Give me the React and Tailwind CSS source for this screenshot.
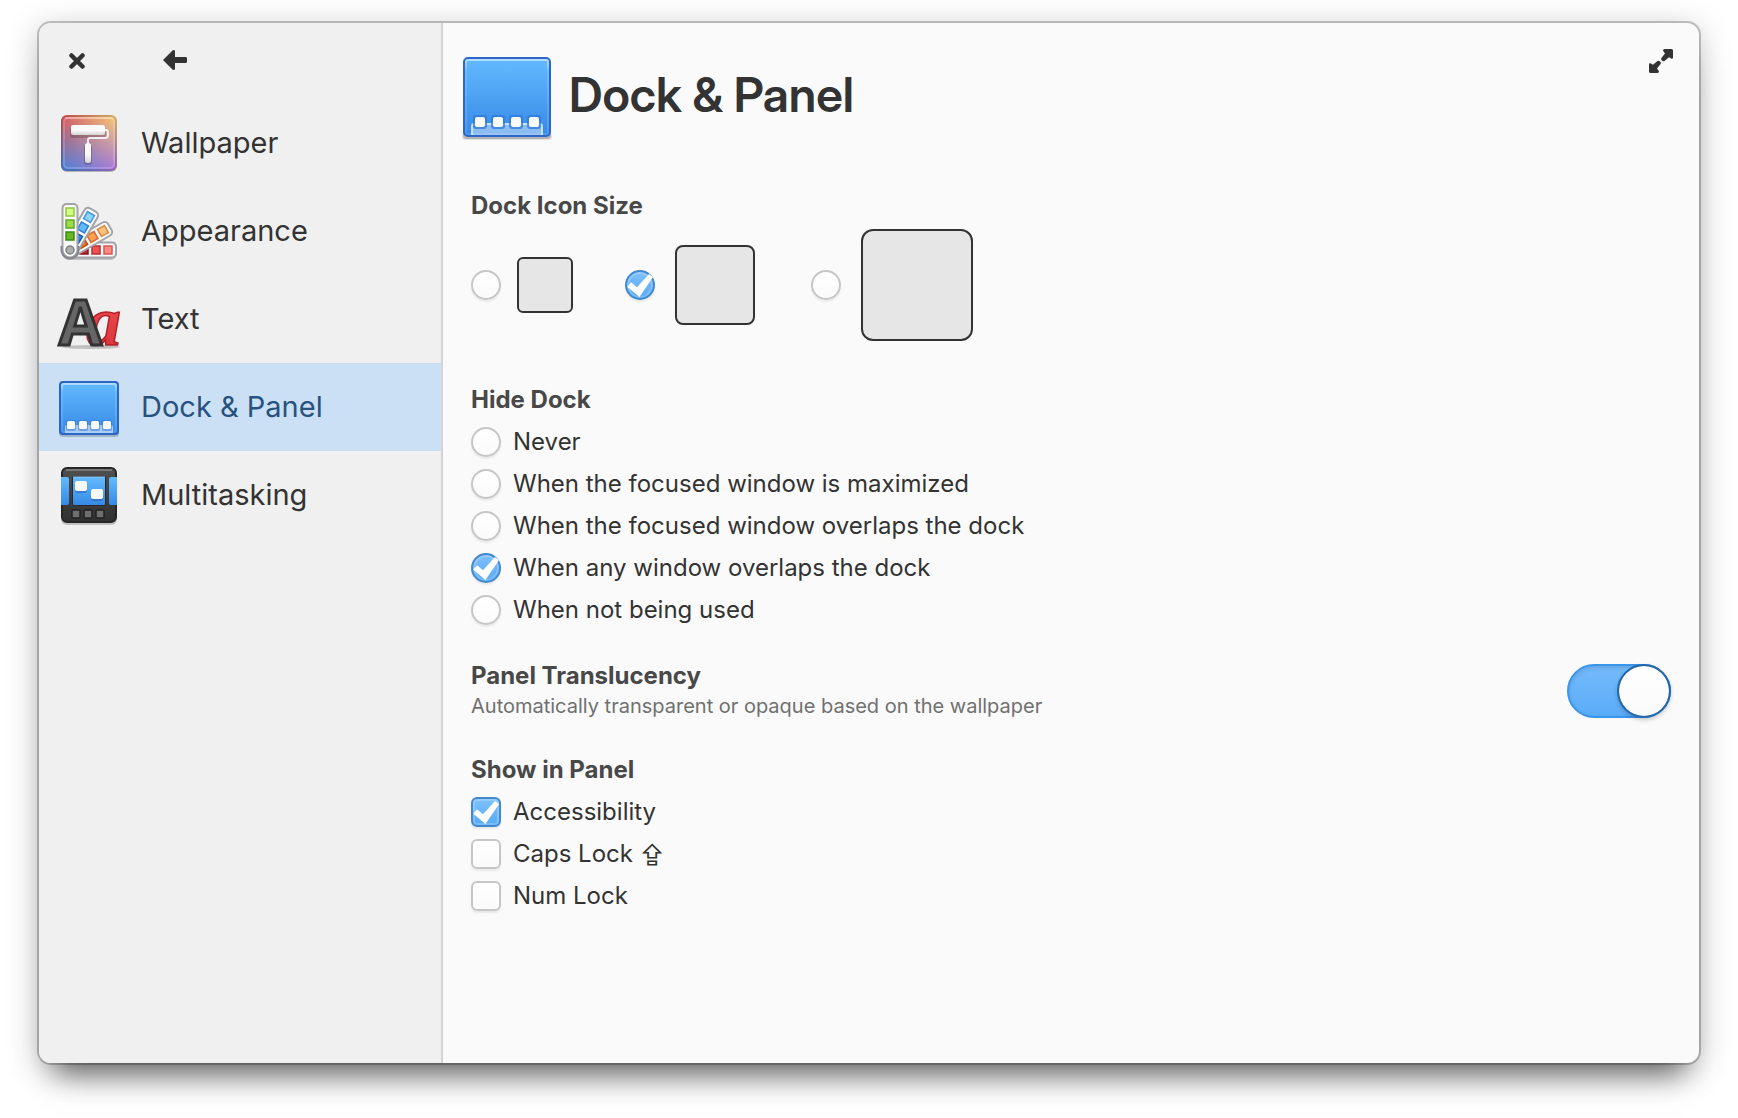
import React from "react";

function Defs() {
  return (
    <svg width="0" height="0" className="absolute" aria-hidden="true">
      <defs>
        <linearGradient id="blue" x1="0" y1="0" x2="0" y2="1">
          <stop offset="0" stopColor="#64baff" />
          <stop offset="1" stopColor="#3689e6" />
        </linearGradient>
        <linearGradient id="edge" x1="0" y1="0" x2="0" y2="1">
          <stop offset="0" stopColor="#fff" stopOpacity=".5" />
          <stop offset=".15" stopColor="#fff" stopOpacity=".12" />
          <stop offset="1" stopColor="#fff" stopOpacity=".12" />
        </linearGradient>
        <linearGradient id="wallTop" x1="0" y1="0" x2="1" y2="0">
          <stop offset="0" stopColor="#ed5353" />
          <stop offset="1" stopColor="#ffd76b" />
        </linearGradient>
        <linearGradient id="wallBottom" x1="0" y1="0" x2="1" y2="0">
          <stop offset="0" stopColor="#3689e6" />
          <stop offset="1" stopColor="#a56de2" />
        </linearGradient>
        <linearGradient id="fade" x1="0" y1="0" x2="0" y2="1">
          <stop offset="0" stopColor="#000" />
          <stop offset="1" stopColor="#fff" />
        </linearGradient>
        <mask id="fadeMask">
          <rect width="64" height="64" fill="url(#fade)" />
        </mask>
        <linearGradient id="roller" x1="0" y1="0" x2="0" y2="1">
          <stop offset=".55" stopColor="#fafafa" />
          <stop offset="1" stopColor="#d4d4d4" />
        </linearGradient>
        <linearGradient id="dark" x1="0" y1="0" x2="0" y2="1">
          <stop offset="0" stopColor="#505050" />
          <stop offset="1" stopColor="#303030" />
        </linearGradient>
        <linearGradient id="letterRed" x1="0" y1="0" x2="0" y2="1">
          <stop offset="0" stopColor="#ed5353" />
          <stop offset="1" stopColor="#d9303a" />
        </linearGradient>
      </defs>
    </svg>
  );
}

function WallpaperIcon() {
  return (
    <svg width="64" height="64" viewBox="0 0 64 64" aria-hidden="true">
      <rect x="4" y="5" width="56" height="56" rx="6" fill="#000" opacity=".25" />
      <rect x="4" y="4" width="56" height="56" rx="6" fill="url(#wallTop)" />
      <rect x="4" y="4" width="56" height="56" rx="6" fill="url(#wallBottom)" mask="url(#fadeMask)" />
      <rect x="7" y="7" width="50" height="50" rx="4" fill="none" stroke="#fff" strokeOpacity=".18" strokeWidth="2" />
      <path d="M8 7h48" stroke="#fff" strokeOpacity=".3" strokeWidth="2" />
      <rect x="5" y="5" width="54" height="54" rx="5" fill="none" stroke="#000" strokeOpacity=".15" strokeWidth="2" />
      <rect x="13" y="17" width="36" height="10" rx="2" fill="#000" opacity=".18" />
      <rect x="27" y="34" width="8" height="20" rx="3" fill="#000" opacity=".18" />
      <path d="M48 19h1a2 2 0 0 1 2 2v3a3 3 0 0 1-3 3H33a2 2 0 0 0-2 2v5" fill="none" stroke="#f0eef2" strokeWidth="2" />
      <rect x="14" y="14" width="34" height="10" rx="2" fill="url(#roller)" />
      <rect x="28" y="32" width="6" height="20" rx="2.500" fill="url(#roller)" />
    </svg>
  );
}

const strips = [
  { angle: 90, colors: [["#ff8c82", "#d65550"], ["#ed5353", "#b82e30"], ["#c6262e", "#8f1016"]] },
  { angle: 60, colors: [["#ffc27d", "#dd8440"], ["#ffa154", "#d5682a"], ["#e8702a", "#b84d10"]] },
  { angle: 30, colors: [["#8cd5ff", "#4a96e0"], ["#64baff", "#2d7cd6"], ["#3689e6", "#1a5db0"]] },
  { angle: 0, colors: [["#d1ff82", "#8fc93f"], ["#9bdb4d", "#62a82a"], ["#68b723", "#3d8a10"]] },
];

function AppearanceIcon() {
  return (
    <svg width="64" height="64" viewBox="0 0 64 64" aria-hidden="true">
      <rect x="6" y="44" width="53" height="17" rx="5" fill="#000" opacity=".2" />
      {strips.map((s) => (
        <g key={s.angle} transform={`rotate(${s.angle} 13 51)`}>
          <path d="M5.500 9a4 4 0 0 1 4-4h7a4 4 0 0 1 4 4v42a7.500 7.500 0 0 1-15 0z" fill="#fbfbfb" stroke="#a3a4aa" strokeWidth="2" />
          {s.colors.map(([fill, stroke], i) => (
            <rect key={fill} x="9" y={9 + i * 12} width="8" height="8" fill={fill} stroke={stroke} strokeWidth="1.500" />
          ))}
        </g>
      ))}
      <path d="M4.500 47v4a8.500 8.500 0 0 0 17 0v-4" fill="none" stroke="#85868d" strokeWidth="2" />
      <circle cx="13" cy="51" r="4" fill="#abacae" stroke="#7e8087" strokeWidth="1.500" />
    </svg>
  );
}

function TextIcon() {
  return (
    <svg width="64" height="64" viewBox="0 0 64 64" className="overflow-visible" aria-hidden="true">
      <ellipse cx="34" cy="60" rx="29" ry="2" fill="#000" opacity=".2" />
      <text x="29" y="58" fontFamily="Liberation Serif, serif" fontStyle="italic" fontWeight="700" fontSize="70" fill="url(#letterRed)" stroke="#b3202a" strokeWidth="1.500">a</text>
      <text x="2" y="58" fontFamily="Open Sans, sans-serif" fontWeight="700" fontSize="62" fill="#666" stroke="#333" strokeWidth="3">A</text>
    </svg>
  );
}

function DockIcon() {
  return (
    <svg width="64" height="64" viewBox="0 0 64 64" aria-hidden="true">
      <rect x="2" y="8" width="60" height="54" rx="4" fill="#000" opacity=".2" />
      <rect x="3" y="7" width="58" height="52" rx="3" fill="url(#blue)" stroke="#2a66c8" strokeWidth="2" />
      <rect x="5" y="9" width="54" height="48" rx="2" fill="none" stroke="url(#edge)" strokeWidth="2" />
      <path d="M8 58v-6a2 2 0 0 1 2-2h44a2 2 0 0 1 2 2v6z" fill="#c3daf6" opacity=".8" />
      {[10, 22, 34, 46].map((x) => (
        <g key={x}>
          <rect x={x - 1} y="45" width="10" height="11" rx="2" fill="#2d74d0" opacity=".5" />
          <rect x={x} y="46" width="8" height="8" rx="1.500" fill="#fafafa" />
        </g>
      ))}
    </svg>
  );
}

function DockIconLarge() {
  return (
    <svg width="96" height="96" viewBox="0 0 96 96" aria-hidden="true">
      <rect x="3" y="84" width="90" height="7" rx="3" fill="#000" opacity=".1" />
      <rect x="4" y="80" width="88" height="10" rx="4" fill="#000" opacity=".2" />
      <rect x="5" y="9" width="86" height="78" rx="4" fill="url(#blue)" stroke="#2b68c8" strokeWidth="2" />
      <rect x="7" y="11" width="82" height="74" rx="2" fill="none" stroke="url(#edge)" strokeWidth="2" />
      <path d="M13 86V77a2 2 0 0 1 2-2h66a2 2 0 0 1 2 2v9" fill="#fff" fillOpacity=".42" stroke="#d8e9fc" strokeOpacity=".85" strokeWidth="2" />
      {[16, 34, 52, 70].map((x) => (
        <g key={x}>
          <rect x={x - 2} y="66" width="14" height="14" rx="3" fill="#2f79d8" opacity=".75" />
          <rect x={x} y="68" width="10" height="10" rx="2" fill="#fafafa" />
        </g>
      ))}
    </svg>
  );
}

function MultitaskingIcon() {
  return (
    <svg width="64" height="64" viewBox="0 0 64 64" aria-hidden="true">
      <rect x="4" y="6" width="56" height="56" rx="6" fill="#000" opacity=".2" />
      <rect x="5" y="5" width="54" height="54" rx="5" fill="url(#dark)" stroke="#262626" strokeWidth="2" />
      <path d="M9 7h46" stroke="#777" strokeWidth="2" />
      <path d="M4 14h6a2 2 0 0 1 2 2v24a2 2 0 0 1-2 2H4zM60 14h-6a2 2 0 0 0-2 2v24a2 2 0 0 0 2 2h6z" fill="url(#blue)" />
      <rect x="15" y="13" width="34" height="30" rx="2" fill="#2a2a2a" />
      <rect x="16" y="14" width="32" height="28" rx="1" fill="url(#blue)" />
      <path d="M16 14h32" stroke="#8ccbff" strokeWidth="1" />
      <rect x="18" y="20" width="12" height="10" rx="2" fill="#1d5fb4" opacity=".5" />
      <rect x="34" y="28" width="12" height="10" rx="2" fill="#1d5fb4" opacity=".5" />
      <rect x="18" y="18" width="12" height="10" rx="2" fill="#fafafa" />
      <rect x="34" y="26" width="12" height="10" rx="2" fill="#fafafa" />
      {[15, 27, 39].map((x) => (
        <rect key={x} x={x} y="47" width="8" height="8" rx="1" fill="#6e6e6e" stroke="#222" strokeWidth="1.500" />
      ))}
    </svg>
  );
}

const sections = [
  { name: "Wallpaper", Icon: WallpaperIcon },
  { name: "Appearance", Icon: AppearanceIcon },
  { name: "Text", Icon: TextIcon },
  { name: "Dock & Panel", Icon: DockIcon, current: true },
  { name: "Multitasking", Icon: MultitaskingIcon },
];

function CheckMark() {
  return (
    <svg viewBox="0 0 30 30" aria-hidden="true" className="pointer-events-none invisible col-start-1 row-start-1 size-[30px] peer-checked:visible">
      <path d="M2.300 16.700L6 12.300l6 5L24 4l4 3-13.500 20z" fill="#fff" />
    </svg>
  );
}

function Tick({ type, shape, ...props }) {
  return (
    <span className="grid size-[30px] shrink-0">
      <input
        type={type}
        className={
          "peer col-start-1 row-start-1 size-[30px] appearance-none border-2 border-[#c6c6c6] bg-linear-to-b from-white to-[#fafafa] shadow-[0_2px_2px_rgba(0,0,0,0.07)] checked:border-[#4289cd] checked:from-[#7ec0fc] checked:to-[#57aaf8] checked:shadow-[inset_0_0_0_2px_rgba(255,255,255,0.2),0_2px_2px_rgba(0,0,0,0.07)] " +
          shape
        }
        {...props}
      />
      <CheckMark />
    </span>
  );
}

function Choice({ type, name, text, checked }) {
  return (
    <label className="flex items-center gap-3 text-2xl leading-[30px] text-[#333]">
      <Tick type={type} name={name} defaultChecked={checked} shape={type === "radio" ? "rounded-full" : "rounded-md"} />
      <span>{text}</span>
    </label>
  );
}

const sizes = [
  { name: "Small", label: "gap-4", box: "size-14 rounded-md" },
  { name: "Default", label: "mr-1 gap-5", box: "size-20 rounded-lg", checked: true },
  { name: "Large", label: "gap-5", box: "size-28 rounded-xl" },
];

const hideModes = [
  "Never",
  "When the focused window is maximized",
  "When the focused window overlaps the dock",
  "When any window overlaps the dock",
  "When not being used",
];

const indicators = ["Accessibility", "Caps Lock ⇪", "Num Lock"];

const heading = "text-2xl leading-[30px] font-bold text-[#484848]";

export default function App() {
  return (
    <div className="flex min-h-screen bg-white px-[39px] pt-[23px] pb-[55px] font-['Inter',sans-serif] text-[#333]">
      <Defs />
      <div className="flex flex-1 rounded-xl bg-[#fafafa] shadow-[0_0_0_2px_rgba(0,0,0,0.22),0_6px_32px_rgba(0,0,0,0.25),0_28px_28px_-16px_rgba(0,0,0,0.5)]">
        <aside className="flex w-[404px] shrink-0 flex-col rounded-l-xl border-r-2 border-[#d4d4d4] bg-[#f0f0f0]">
          <div className="flex h-[76px] items-center gap-[71px] pl-[26px]">
            <button aria-label="Close" className="grid size-6 place-items-center">
              <svg width="16" height="16" viewBox="0 0 16 16" aria-hidden="true">
                <path d="M2.500 2.500l11 11M13.500 2.500l-11 11" stroke="#333" strokeWidth="4.500" strokeLinecap="round" />
              </svg>
            </button>
            <button aria-label="Back" className="grid size-[30px] place-items-center">
              <svg width="24" height="22" viewBox="0 0 24 22" aria-hidden="true">
                <path d="M0 10L9.500.6c1-.9 2.500-.6 2.500 1V7h10.500c1 0 1.500.7 1.500 1.500v3c0 .8-.5 1.500-1.500 1.500H12v5.400c0 1.600-1.500 1.900-2.500 1z" fill="#333" />
              </svg>
            </button>
          </div>
          <nav className="flex flex-col">
            {sections.map(({ name, Icon, current }) => (
              <button
                key={name}
                aria-current={current ? "page" : undefined}
                className={
                  "flex h-[88px] items-center gap-5 pl-[18px] text-left text-[29px] leading-9 " +
                  (current ? "bg-[#cbe0f4] text-[#27527f]" : "")
                }
              >
                <Icon />
                <span>{name}</span>
              </button>
            ))}
          </nav>
        </aside>

        <main className="flex min-w-0 flex-1 flex-col pr-7 pb-7 pl-7">
          <header className="-ml-3 flex items-start justify-between pt-[26px]">
            <div className="flex items-center gap-3.5">
              <DockIconLarge />
              <h1 className="pb-1 font-['Inter_Display','Inter',sans-serif] text-5xl font-semibold [font-variation-settings:'opsz'_32]">Dock &amp; Panel</h1>
            </div>
            <button aria-label="Maximize" className="-mr-0.5 grid size-6 place-items-center">
              <svg width="24" height="24" viewBox="0 0 24 24" aria-hidden="true">
                <path d="M15.500 0H22.500Q24 0 24 1.500V8.500Q24 10 22.600 9.800L20 8.200 15.500 12Q14 12.600 12.800 11.400 11.600 10.200 12.400 9L16 4.500 14 1.700Q14 0 15.500 0z" fill="#333" />
                <path d="M8.500 24H1.500Q0 24 0 22.500V15.500Q0 14 1.400 14.200L4 15.800 8.500 12Q10 11.400 11.200 12.600 12.400 13.800 11.600 15L8 19.500 10 22.300Q10 24 8.500 24z" fill="#333" />
              </svg>
            </button>
          </header>

          <fieldset className="mt-[46px]">
            <legend className={heading}>Dock Icon Size</legend>
            <div className="mt-2 flex items-center gap-[52px]">
              {sizes.map((s) => (
                <label key={s.name} aria-label={s.name} className={"flex items-center " + s.label}>
                  <Tick type="radio" name="icon-size" defaultChecked={s.checked} shape="rounded-full" />
                  <span className={"border-2 border-[#333] bg-[#e6e6e6] " + s.box} />
                </label>
              ))}
            </div>
          </fieldset>

          <fieldset className="mt-11">
            <legend className={heading}>Hide Dock</legend>
            <div className="mt-3 flex flex-col gap-3">
              {hideModes.map((text, i) => (
                <Choice key={text} type="radio" name="hide-dock" text={text} checked={i === 3} />
              ))}
            </div>
          </fieldset>

          <div className="mt-9 flex items-center justify-between">
            <div>
              <label htmlFor="translucency" className={"block " + heading}>Panel Translucency</label>
              <p className="text-xl leading-[30px] text-[#707070]">Automatically transparent or opaque based on the wallpaper</p>
            </div>
            <span className="grid shrink-0">
              <input
                id="translucency"
                type="checkbox"
                role="switch"
                defaultChecked
                className="peer col-start-1 row-start-1 h-[54px] w-[104px] appearance-none rounded-full border-2 border-[#c6c6c6] bg-[#e6e6e6] checked:border-[#3895ec] checked:bg-linear-to-b checked:from-[#74bafb] checked:to-[#5aacf9] checked:shadow-[inset_0_2px_4px_rgba(0,0,0,0.12)]"
              />
              <span className="pointer-events-none col-start-1 row-start-1 size-[54px] rounded-full border-2 border-[#999] bg-linear-to-b from-white to-[#fafafa] bg-clip-padding shadow-[0_2px_4px_rgba(0,0,0,0.2)] peer-checked:justify-self-end peer-checked:border-[#2467a8]" />
            </span>
          </div>

          <fieldset className="mt-[34px]">
            <legend className={heading}>Show in Panel</legend>
            <div className="mt-3 flex flex-col gap-3">
              {indicators.map((text, i) => (
                <Choice key={text} type="checkbox" name="indicator" text={text} checked={i === 0} />
              ))}
            </div>
          </fieldset>
        </main>
      </div>
    </div>
  );
}
